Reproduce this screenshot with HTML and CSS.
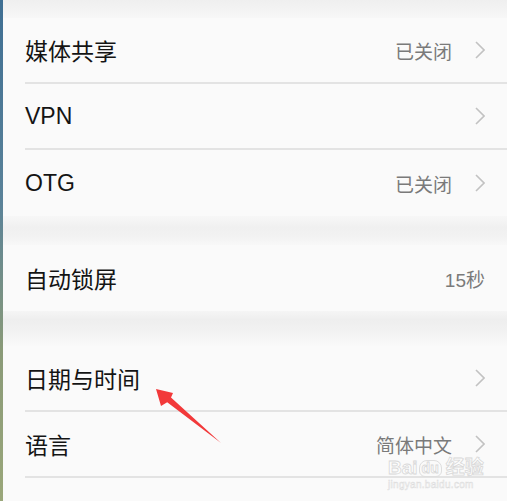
FILE: index.html
```html
<!DOCTYPE html>
<html lang="zh-CN">
    <head>
        <meta charset="UTF-8" />
        <meta name="viewport" content="width=device-width, initial-scale=1.0" />
        <title>设置</title>
        <link rel="stylesheet" href="styles.css">
    </head>
    <body>
        <div class="screen">
            <div class="edge"></div>
            <div class="settings">
                <div class="gap gap-top"></div>
                <div class="group">
                    <div class="row">
                        <span class="title">媒体共享</span>
                        <span class="value">已关闭</span>
                        <svg class="chevron" viewBox="0 0 10 18"><polyline points="1,1 9,9 1,17" /></svg>
                    </div>
                    <div class="row">
                        <span class="title">VPN</span>
                        <svg class="chevron" viewBox="0 0 10 18"><polyline points="1,1 9,9 1,17" /></svg>
                    </div>
                    <div class="row">
                        <span class="title">OTG</span>
                        <span class="value">已关闭</span>
                        <svg class="chevron" viewBox="0 0 10 18"><polyline points="1,1 9,9 1,17" /></svg>
                    </div>
                </div>
                <div class="gap gap-one"></div>
                <div class="group">
                    <div class="row">
                        <span class="title">自动锁屏</span>
                        <span class="value">15秒</span>
                    </div>
                </div>
                <div class="gap gap-two"></div>
                <div class="group">
                    <div class="row">
                        <span class="title">日期与时间</span>
                        <svg class="chevron" viewBox="0 0 10 18"><polyline points="1,1 9,9 1,17" /></svg>
                    </div>
                    <div class="row">
                        <span class="title">语言</span>
                        <span class="value">简体中文</span>
                        <svg class="chevron" viewBox="0 0 10 18"><polyline points="1,1 9,9 1,17" /></svg>
                    </div>
                    <div class="row"></div>
                </div>
            </div>

            <!-- 标注箭头 -->
            <svg class="arrow" viewBox="0 0 80 70">
                <polygon points="6,9 23,13 21,17.6 71,63 17.2,22.2 11,26" />
            </svg>

            <div class="watermark">
                <div class="mark-logo"><span>Bai</span><span class="paw">du</span><span>经验</span></div>
                <div class="mark-url">jingyan.baidu.com</div>
            </div>
        </div>
    </body>
</html>
```

FILE: styles.css
```css
html,
body {
    margin: 0;
    padding: 0;
}
body {
    background: #f9f9f9;
    font-family: "Liberation Sans", "Noto Sans CJK SC", sans-serif;
}
.screen {
    position: relative;
    display: flex;
    width: 507px;
    height: 501px;
    overflow: hidden;
}
.edge {
    width: 3px;
    flex-shrink: 0;
    background: linear-gradient(#3f6f93 0%, #5a8299 40%, #8a9a78 70%, #9aa77a 100%);
}
.settings {
    flex: 1;
    display: flex;
    flex-direction: column;
}
.gap,
.group {
    flex-shrink: 0;
}
.gap {
    background: linear-gradient(#f7f7f7, #f0f0f0 40%, #f2f2f2 70%, #f8f8f8);
}
.gap-top {
    height: 18px;
    background: linear-gradient(#efefef, #f7f7f7);
}
.gap-one {
    height: 29px;
}
.gap-two {
    height: 35px;
    background: linear-gradient(#f5f5f5, #eeeeee 25%, #f2f2f2 60%, #f9f9f9);
}
.group {
    background: #fafafa;
    padding-left: 22px;
}
.row {
    display: flex;
    align-items: center;
    height: 64px;
    padding-right: 22px;
    border-bottom: 2px solid #e3e3e3;
}
.row:last-child {
    border-bottom: none;
    height: 66px;
}
.title {
    flex: 1;
    font-size: 23px;
    color: #141414;
}
.value {
    font-size: 19px;
    color: #7a7a7a;
}
.chevron {
    width: 10px;
    height: 18px;
    margin-left: 23px;
    fill: none;
    stroke: #c2c2c2;
    stroke-width: 1.6;
}
.arrow {
    position: absolute;
    left: 150px;
    top: 380px;
    width: 80px;
    height: 70px;
    fill: #f2393a;
}
.watermark {
    position: absolute;
    left: 388px;
    top: 458px;
    color: rgba(255, 255, 255, 0.7);
    -webkit-text-stroke: 0.8px #d8d8d8;
    font-family: "Liberation Sans", "Noto Sans CJK SC", sans-serif;
    font-weight: bold;
}
.mark-logo {
    display: flex;
    align-items: flex-end;
    font-size: 19px;
    line-height: 19px;
}
.mark-logo .paw {
    font-size: 14px;
    margin: 0 4px 0 1px;
    padding: 0 2px;
    border-radius: 8px 8px 6px 6px;
    border: 1px solid #dedede;
    line-height: 15px;
}
.mark-url {
    font-size: 10px;
    font-weight: normal;
    -webkit-text-stroke: 0.5px #dcdcdc;
    margin-top: 2px;
    letter-spacing: 0.3px;
}
```
